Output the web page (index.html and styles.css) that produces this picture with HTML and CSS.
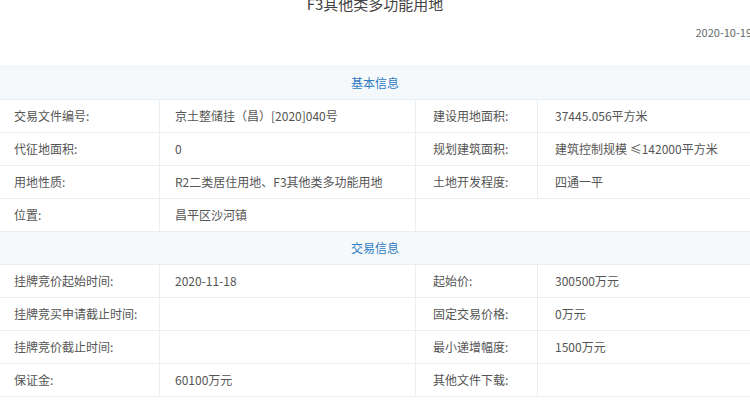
FILE: index.html
```html
<!DOCTYPE html>
<html lang="zh">
<head>
<meta charset="utf-8">
<title>F3其他类多功能用地</title>
<link rel="stylesheet" href="styles.css">
</head>
<body>
<div class="page">
  <h1 class="title">F3其他类多功能用地</h1>
  <div class="meta"><span class="date">2020-10-19</span></div>
  <div class="info">
    <div class="sec">基本信息</div>
    <div class="c lab">交易文件编号:</div>
    <div class="c val">京土整储挂（昌）[2020]040号</div>
    <div class="c lab2">建设用地面积:</div>
    <div class="c val2">37445.056平方米</div>

    <div class="c lab">代征地面积:</div>
    <div class="c val">0</div>
    <div class="c lab2">规划建筑面积:</div>
    <div class="c val2">建筑控制规模 ≤142000平方米</div>

    <div class="c lab">用地性质:</div>
    <div class="c val">R2二类居住用地、F3其他类多功能用地</div>
    <div class="c lab2">土地开发程度:</div>
    <div class="c val2">四通一平</div>

    <div class="c lab">位置:</div>
    <div class="c val">昌平区沙河镇</div>
    <div class="c span2"></div>

    <div class="sec">交易信息</div>
    <div class="c lab">挂牌竞价起始时间:</div>
    <div class="c val">2020-11-18</div>
    <div class="c lab2">起始价:</div>
    <div class="c val2">300500万元</div>

    <div class="c lab">挂牌竞买申请截止时间:</div>
    <div class="c val"></div>
    <div class="c lab2">固定交易价格:</div>
    <div class="c val2">0万元</div>

    <div class="c lab">挂牌竞价截止时间:</div>
    <div class="c val"></div>
    <div class="c lab2">最小递增幅度:</div>
    <div class="c val2">1500万元</div>

    <div class="c lab">保证金:</div>
    <div class="c val">60100万元</div>
    <div class="c lab2">其他文件下载:</div>
    <div class="c val2"></div>
  </div>
</div>
</body>
</html>
```
FILE: styles.css
```css
html, body {
  margin: 0;
  padding: 0;
  background: #ffffff;
}
body {
  font-family: "Noto Sans CJK SC", "Noto Sans", sans-serif;
  color: #555555;
  overflow: hidden;
}
.page {
  width: 750px;
}
.title {
  margin: -6px 0 0 0;
  height: 20px;
  font-size: 15px;
  line-height: 20px;
  font-weight: normal;
  color: #444444;
  text-align: center;
}
.meta {
  display: flex;
  justify-content: flex-end;
  margin-top: 10px;
  height: 16px;
}
.date {
  font-size: 11px;
  line-height: 16px;
  color: #666666;
  margin-right: -2px;
}
.info {
  margin-top: 26px;
  display: grid;
  grid-template-columns: 160px 256px 122px 1fr;
  grid-auto-rows: 33px;
  border-top: 1px solid #eef2f6;
  font-size: 12px;
  line-height: 16px;
}
.sec {
  grid-column: 1 / -1;
  height: 33px;
  background: #f5f9fc;
  color: #2f7cc0;
  text-align: center;
  display: flex;
  align-items: center;
  justify-content: center;
  border-bottom: 1px solid #eaeef3;
  box-sizing: border-box;
}
.c {
  display: flex;
  align-items: center;
  box-sizing: border-box;
  border-bottom: 1px solid #eaeef3;
  border-right: 1px solid #eaeef3;
  color: #555555;
  white-space: nowrap;
}
.lab { padding-left: 14px; }
.val { padding-left: 15px; }
.lab2 { padding-left: 17px; }
.val2 { padding-left: 17px; border-right: none; }
.span2 { grid-column: 3 / 5; border-right: none; }
```
